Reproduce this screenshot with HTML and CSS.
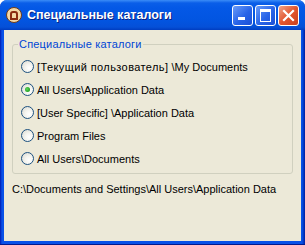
FILE: index.html
```html
<!DOCTYPE html>
<html lang="ru">
<head>
  <meta charset="UTF-8" />
  <title>Специальные каталоги</title>
  <link rel="stylesheet" href="styles.css">
</head>
<body>

<div class="window">
  <div class="titlebar">
    <span class="app-icon"><span class="app-icon-inner"></span></span>
    <span class="title">Специальные каталоги</span>
    <span class="tb-btn"><span class="min-glyph"></span></span>
    <span class="tb-btn"><span class="max-glyph"></span></span>
    <span class="tb-btn close">
      <svg width="13" height="13" viewBox="0 0 13 13"><path d="M2 2 L11 11 M11 2 L2 11" stroke="#fff" stroke-width="2.2" stroke-linecap="square"/></svg>
    </span>
  </div>

  <div class="client">
    <fieldset class="group">
      <legend>Специальные каталоги</legend>
      <label class="radio"><span class="dot"></span><span class="cyr">[Текущий пользователь]</span>&nbsp;\My Documents</label>
      <label class="radio checked"><span class="dot"></span>All Users\Application Data</label>
      <label class="radio"><span class="dot"></span>[User Specific] \Application Data</label>
      <label class="radio"><span class="dot"></span>Program Files</label>
      <label class="radio"><span class="dot"></span>All Users\Documents</label>
    </fieldset>
    <div class="path">C:\Documents and Settings\All Users\Application Data</div>
  </div>
</div>

</body>
</html>
```

FILE: styles.css
```css
body {
  margin: 0;
  width: 305px;
  height: 245px;
  font-family: 'Liberation Sans', Arial, sans-serif;
  font-size: 11px;
  color: #000;
  background: #fff;
}
.window {
  width: 305px;
  height: 245px;
  box-sizing: border-box;
  display: flex;
  flex-direction: column;
  background: linear-gradient(90deg, #0019b0 0, #0851e8 2px, #0851e8 302px, #001ea0 305px);
  border-radius: 7px 7px 0 0;
  padding: 0 4px 4px 4px;
  box-shadow: inset 0 -1px 0 #001a8f;
}
.titlebar {
  height: 30px;
  margin: 0 -4px;
  padding: 0 6px 0 6px;
  display: flex;
  align-items: center;
  border-radius: 7px 7px 0 0;
  background: linear-gradient(180deg, #3b8cf7 0, #0a5ee8 3px, #0458e6 8px, #0255e1 20px, #0550d8 27px, #003dc0 30px);
}
.app-icon {
  width: 16px;
  height: 16px;
  border-radius: 50%;
  background: #f4d7a6;
  border: 1px solid #6b3b1a;
  box-sizing: border-box;
  display: flex;
  align-items: center;
  justify-content: center;
  margin-right: 5px;
}
.app-icon-inner {
  width: 8px;
  height: 9px;
  border: 2px solid #8b2a10;
  border-radius: 3px 3px 0 0;
  box-sizing: border-box;
}
.title {
  flex: 1;
  color: #fff;
  font-weight: bold;
  font-size: 12.5px;
  text-shadow: 1px 1px 0 #0a1f80;
}
.tb-btn {
  width: 21px;
  height: 21px;
  margin-left: 2px;
  box-sizing: border-box;
  border: 1px solid #fff;
  border-radius: 3px;
  background: linear-gradient(135deg, #6a9cf9 0, #2864e8 55%, #1a4fd6 100%);
  display: flex;
  align-items: center;
  justify-content: center;
  position: relative;
}
.tb-btn.close {
  background: linear-gradient(135deg, #f0a48a 0, #e2562f 50%, #c8401e 100%);
}
.min-glyph {
  width: 7px;
  height: 3px;
  background: #fff;
  position: absolute;
  left: 5px;
  bottom: 5px;
}
.max-glyph {
  width: 9px;
  height: 9px;
  border: 1px solid #fff;
  border-top-width: 3px;
}
.client {
  flex: 1;
  background: #ece9d8;
  padding: 8px 8px 0 8px;
  display: flex;
  flex-direction: column;
}
.group {
  margin: 0;
  padding: 5px 0 5px 8px;
  border: 1px solid #d0d0bf;
  border-radius: 3px;
  display: flex;
  flex-direction: column;
  height: 136px;
  box-sizing: border-box;
}
.group legend {
  color: #0046d5;
  padding: 0 1px;
  margin-left: -3px;
  letter-spacing: 0.2px;
}
.radio {
  display: flex;
  align-items: center;
  height: 23px;
}
.cyr {
  letter-spacing: 0.4px;
}
.dot {
  width: 13px;
  height: 13px;
  box-sizing: border-box;
  border: 1px solid #1c5180;
  border-radius: 50%;
  background: radial-gradient(circle at 65% 65%, #fff 0, #f4f4ef 40%, #d6d5cc 100%);
  margin-right: 3px;
  display: flex;
  align-items: center;
  justify-content: center;
}
.checked .dot::after {
  content: "";
  width: 5px;
  height: 5px;
  border-radius: 50%;
  background: radial-gradient(circle at 40% 40%, #5fd65f 0, #21a121 70%);
}
.path {
  margin-top: 9px;
}
```
